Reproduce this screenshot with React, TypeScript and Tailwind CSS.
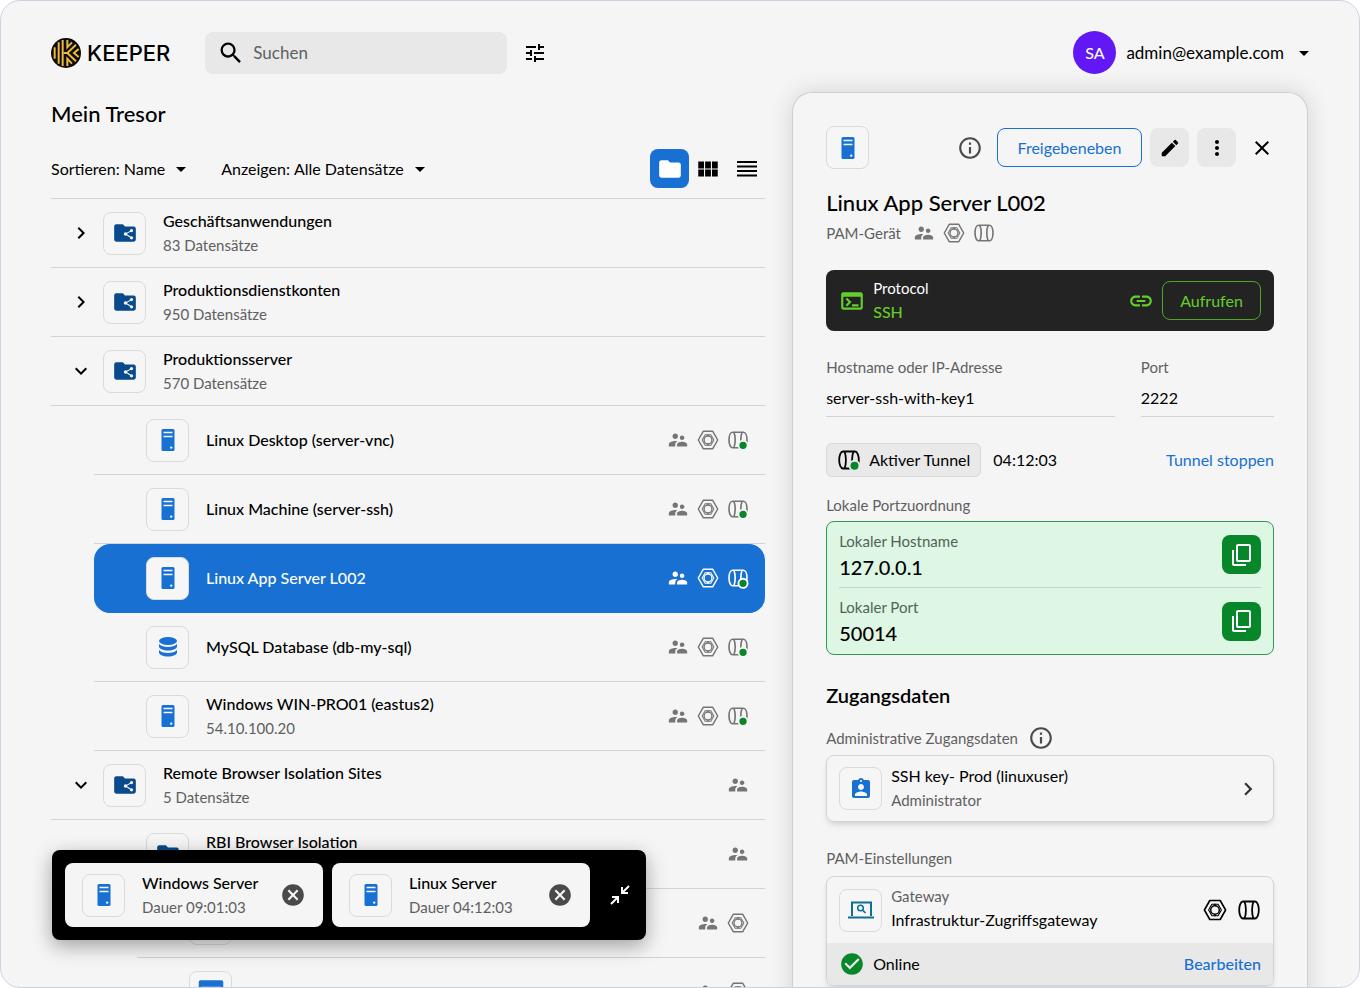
import type { ReactNode } from "react";
import {
  MdArrowDropDown,
  MdAssignmentInd,
  MdCancel,
  MdCheckCircle,
  MdChevronRight,
  MdClose,
  MdContentCopy,
  MdEdit,
  MdFolder,
  MdInfoOutline,
  MdKeyboardArrowDown,
  MdLink,
  MdMoreVert,
  MdOutlineTerminal,
  MdSearch,
  MdSupervisorAccount,
  MdTune,
  MdViewModule,
} from "react-icons/md";

type IconKind = "shared" | "server" | "database" | "browser" | "badge" | "laptop";
type Badge = "users" | "gateway" | "tunnel";

type Row = {
  name: string;
  sub?: string;
  level: 0 | 1 | 2;
  icon: IconKind;
  open?: boolean;
  selected?: boolean;
  badges?: Badge[];
};

const ROWS: Row[] = [
  { name: "Geschäftsanwendungen", sub: "83 Datensätze", level: 0, icon: "shared", open: false },
  { name: "Produktionsdienstkonten", sub: "950 Datensätze", level: 0, icon: "shared", open: false },
  { name: "Produktionsserver", sub: "570 Datensätze", level: 0, icon: "shared", open: true },
  { name: "Linux Desktop (server-vnc)", level: 1, icon: "server", badges: ["users", "gateway", "tunnel"] },
  { name: "Linux Machine (server-ssh)", level: 1, icon: "server", badges: ["users", "gateway", "tunnel"] },
  { name: "Linux App Server L002", level: 1, icon: "server", selected: true, badges: ["users", "gateway", "tunnel"] },
  { name: "MySQL Database (db-my-sql)", level: 1, icon: "database", badges: ["users", "gateway", "tunnel"] },
  { name: "Windows WIN-PRO01 (eastus2)", sub: "54.10.100.20", level: 1, icon: "server", badges: ["users", "gateway", "tunnel"] },
  { name: "Remote Browser Isolation Sites", sub: "5 Datensätze", level: 0, icon: "shared", open: true, badges: ["users"] },
  { name: "RBI Browser Isolation", sub: "3 Datensätze", level: 1, icon: "shared", badges: ["users"] },
  { name: "Azure Portal", level: 2, icon: "browser", badges: ["users", "gateway"] },
  { name: "AWS-datenpunkt", level: 2, icon: "browser", badges: ["users", "gateway"] },
];

const INDENT = { 0: "ml-0", 1: "ml-[43px]", 2: "ml-[86px]" };

function Logo() {
  return (
    <div className="flex items-center gap-1.5" aria-label="Keeper">
      <svg viewBox="0 0 90 90" className="size-[30px]" aria-hidden="true">
        <circle cx="45" cy="45" r="45" fill="#0b0b0b" />
        <g fill="none" stroke="#ecb93c" strokeWidth="6">
          <path d="M11 28v34M23 13v64M35 6v78" />
          <path d="M37 45h12l26-25M49 45l26 25" />
          <path d="M49 6v22l14-15M49 84V62l14 15" />
          <path d="M83 33 69 45l14 12" />
        </g>
      </svg>
      <span className="text-[22px] leading-7 font-medium font-['Inter',sans-serif]">KEEPER</span>
    </div>
  );
}

function GatewayIcon({ className = "size-[22px]" }: { className?: string }) {
  return (
    <svg viewBox="0 0 24 24" className={className} fill="none" stroke="currentColor" strokeWidth="1.6" strokeLinejoin="round" aria-hidden="true">
      <path d="M6.800 2.500h10.400L22.600 12l-5.400 9.500H6.800L1.400 12z" />
      <path d="M8.900 6.200h6.200L18.400 12l-3.300 5.800H8.900L5.600 12z" strokeWidth="1.100" />
      <circle cx="12" cy="12" r="4.300" strokeWidth="1.500" />
      <path d="M12 5.800v2M12 16.200v2" />
    </svg>
  );
}

function TunnelIcon({ dot, className = "size-[22px]", ring = "#f5f5f5" }: { dot?: boolean; className?: string; ring?: string }) {
  return (
    <svg viewBox="0 0 24 24" className={className} fill="none" stroke="currentColor" strokeWidth="1.800" aria-hidden="true">
      <path d="M6 3.500h12c2.300 0 3.800 4 3.800 8.500s-1.500 8.500-3.800 8.500H6c-2.300 0-3.800-4-3.800-8.500S3.700 3.500 6 3.500z" />
      <path d="M7.500 3.500c1.900 4.500 1.900 12.500 0 17M16.500 3.500c-1.900 4.500-1.900 12.500 0 17" />
      {dot && <circle cx="17.500" cy="17.800" r="5" fill="#08862a" stroke={ring} strokeWidth="2" />}
    </svg>
  );
}

function TileIcon({ kind }: { kind: IconKind }) {
  if (kind === "badge") return <MdAssignmentInd className="size-6 text-[#1870d2]" />;
  if (kind === "shared") {
    return (
      <svg viewBox="0 0 24 24" className="size-[26px]" aria-hidden="true">
        <path d="M4 4h6l2 2h8a2 2 0 0 1 2 2v10a2 2 0 0 1-2 2H4a2 2 0 0 1-2-2V6a2 2 0 0 1 2-2z" fill="#084a8c" />
        <path d="m18 9.800-5.500 3.200 5.500 3.400" fill="none" stroke="#f5f5f5" />
        <g fill="#f5f5f5">
          <circle cx="18" cy="9.800" r="1.500" />
          <circle cx="12.500" cy="13" r="1.600" />
          <circle cx="18" cy="16.400" r="1.500" />
        </g>
      </svg>
    );
  }
  if (kind === "database") {
    return (
      <svg viewBox="0 0 24 24" className="size-6 text-[#1870d2]" fill="currentColor" aria-hidden="true">
        <ellipse cx="12" cy="6" rx="9" ry="4" />
        <path d="M3 9c1.500 2 5 3 9 3s7.500-1 9-3v2.600c0 2.200-4 4-9 4s-9-1.800-9-4z" />
        <path d="M3 15c1.500 2 5 3 9 3s7.500-1 9-3v2.600c0 2.200-4 4-9 4s-9-1.800-9-4z" />
      </svg>
    );
  }
  if (kind === "browser") {
    return (
      <svg viewBox="0 0 24 24" className="size-7" aria-hidden="true">
        <path d="M3 2h18a1.500 1.500 0 0 1 1.500 1.500v17A1.500 1.500 0 0 1 21 22H3a1.500 1.500 0 0 1-1.500-1.500v-17A1.500 1.500 0 0 1 3 2zm.500 5.500V20h17V7.500z" fill="#1870d2" fillRule="evenodd" />
      </svg>
    );
  }
  if (kind === "laptop") {
    return (
      <svg viewBox="0 0 26 26" className="size-[26px]" fill="none" stroke="#0e6f93" strokeWidth="2" aria-hidden="true">
        <path d="M4 19V5.500h19V19M0 20.500h26" />
        <circle cx="12.500" cy="11" r="2.800" strokeWidth="1.500" />
        <path d="m14.500 13 3 3" strokeWidth="1.700" />
      </svg>
    );
  }
  return (
    <svg viewBox="0 0 14 24" className="h-6 w-3.5" aria-hidden="true">
      <rect x="0.500" y="1" width="13" height="22" rx="1.500" fill="#1870d2" />
      <path d="M2.500 4.500h9M2.500 8.500h9" stroke="#f5f5f5" strokeWidth="1.600" />
      <circle cx="10.200" cy="19.600" r="1.200" fill="#f5f5f5" />
    </svg>
  );
}

function Tile({ kind }: { kind: IconKind }) {
  return (
    <span className="flex size-[43px] shrink-0 items-center justify-center rounded-lg border border-[#dadada] bg-[#f6f6f6]">
      <TileIcon kind={kind} />
    </span>
  );
}

function Badges({ items, selected }: { items: Badge[]; selected?: boolean }) {
  return (
    <span className={`flex items-center gap-2 ${selected ? "text-white" : "text-[#757575]"}`}>
      {items.map((b) => {
        if (b === "users") return <MdSupervisorAccount key={b} className="size-[22px]" />;
        if (b === "gateway") return <GatewayIcon key={b} />;
        return <TunnelIcon key={b} dot ring={selected ? "#ffffff" : "#f5f5f5"} />;
      })}
    </span>
  );
}

function TreeRow({ row }: { row: Row }) {
  return (
    <li
      className={`flex h-[69px] shrink-0 items-center border-b pr-4 ${INDENT[row.level]} ${
        row.selected ? "rounded-2xl border-[#1870d2] bg-[#1870d2] text-white" : "border-[#d2d3d4]"
      }`}
    >
      <span className="flex w-[52px] shrink-0 justify-center pl-2">
        {row.open !== undefined && (
          <button type="button" aria-expanded={row.open} aria-label={row.name}>
            {row.open ? <MdKeyboardArrowDown className="size-6" /> : <MdChevronRight className="size-6" />}
          </button>
        )}
      </span>
      <Tile kind={row.icon} />
      <div className="ml-[17px] min-w-0 flex-1">
        <p className="truncate text-base leading-6 font-medium">{row.name}</p>
        {row.sub && <p className="truncate text-[15px] leading-6 text-[#5f6061]">{row.sub}</p>}
      </div>
      {row.badges && <Badges items={row.badges} selected={row.selected} />}
    </li>
  );
}

function Dropdown({ id, label, options }: { id: string; label: string; options: string[] }) {
  return (
    <div className="flex items-center">
      <label htmlFor={id}>{label}</label>
      <div className="relative ml-1">
        <select id={id} className="appearance-none bg-transparent pr-[26px] [field-sizing:content]">
          {options.map((o) => (
            <option key={o}>{o}</option>
          ))}
        </select>
        <MdArrowDropDown className="pointer-events-none absolute top-0 right-[-2px] size-6" />
      </div>
    </div>
  );
}

function Session({ name, time }: { name: string; time: string }) {
  return (
    <div className="flex h-16 w-[258px] items-center rounded-lg bg-[#f5f5f5] px-[17px]">
      <Tile kind="server" />
      <div className="ml-[17px] flex-1">
        <p className="text-base leading-6 font-medium">{name}</p>
        <p className="text-[15px] leading-6 text-[#5f6061]">{time}</p>
      </div>
      <button type="button" aria-label={`${name} schließen`}>
        <MdCancel className="size-[26px] text-[#4a4a4a]" />
      </button>
    </div>
  );
}

function Field({ id, label, value, className }: { id: string; label: string; value: string; className: string }) {
  return (
    <div className={className}>
      <label htmlFor={id} className="block text-[15px] leading-6 text-[#5f6061]">
        {label}
      </label>
      <input id={id} defaultValue={value} className="h-[38px] w-full border-b border-[#d2d3d4] bg-transparent text-base outline-none" />
    </div>
  );
}

function PortRow({ label, value }: { label: string; value: string }) {
  return (
    <div className="flex h-[66px] items-center justify-between">
      <div>
        <p className="text-[15px] leading-6 text-[#4f6456]">{label}</p>
        <p className="text-xl leading-7 font-medium">{value}</p>
      </div>
      <button type="button" aria-label={`${label} kopieren`} className="flex size-[39px] items-center justify-center rounded-lg bg-[#08862a] text-white">
        <MdContentCopy className="size-6 -scale-y-100" />
      </button>
    </div>
  );
}

function GreyButton({ label, children }: { label: string; children: ReactNode }) {
  return (
    <button type="button" aria-label={label} className="ml-2 flex size-[39px] items-center justify-center rounded-lg bg-[#e8e8e8]">
      {children}
    </button>
  );
}

function DetailPanel() {
  return (
    <aside className="rounded-t-[20px] border border-b-0 border-[#cfcfd2] bg-[#f5f5f5] px-[33px] pt-[33px] shadow-[0_0_24px_rgba(0,0,0,0.14)]">
      <div className="flex items-center">
        <Tile kind="server" />
        <span className="flex-1" />
        <MdInfoOutline className="mr-3.5 size-[26px] text-[#4a4a4a]" />
        <button type="button" className="h-[39px] w-[145px] rounded-lg border border-[#1870d2] text-base text-[#1870d2]">
          Freigebeneben
        </button>
        <GreyButton label="Bearbeiten">
          <MdEdit className="size-[22px]" />
        </GreyButton>
        <GreyButton label="Mehr">
          <MdMoreVert className="size-6" />
        </GreyButton>
        <button type="button" aria-label="Schließen" className="ml-3.5">
          <MdClose className="size-6" />
        </button>
      </div>

      <h2 className="mt-5 text-[22px] leading-7 font-medium">Linux App Server L002</h2>
      <div className="mt-1 flex h-6 items-center text-[15px] text-[#5f6061]">
        PAM-Gerät
        <span className="ml-3 flex items-center gap-2 text-[#757575]">
          <MdSupervisorAccount className="size-[22px]" />
          <GatewayIcon />
          <TunnelIcon />
        </span>
      </div>

      <div className="mt-[25px] flex h-[61px] items-center rounded-lg bg-[#232323] px-[13px] text-[#63cf2b]">
        <MdOutlineTerminal className="size-[26px]" />
        <div className="ml-2 flex-1 pb-0.5">
          <p className="text-[15px] leading-6 text-white">Protocol</p>
          <p className="text-base leading-6 font-medium">SSH</p>
        </div>
        <MdLink className="mr-2 size-[26px]" />
        <button type="button" className="h-[39px] w-[99px] rounded-lg border border-[#4fa527] text-base">
          Aufrufen
        </button>
      </div>

      <div className="mt-6 flex gap-[26px]">
        <Field id="host" label="Hostname oder IP-Adresse" value="server-ssh-with-key1" className="min-w-0 grow-[13] basis-0" />
        <Field id="port" label="Port" value="2222" className="min-w-0 grow-[6] basis-0" />
      </div>

      <div className="mt-[26px] flex items-center">
        <span className="flex h-[34px] items-center gap-2 rounded-md border border-[#d8d8d8] bg-[#e9e9e9] px-2.5 text-base">
          <TunnelIcon dot className="size-6" ring="#e9e9e9" />
          Aktiver Tunnel
        </span>
        <span className="ml-3 flex-1 text-base">04:12:03</span>
        <button type="button" className="text-base text-[#1870d2]">
          Tunnel stoppen
        </button>
      </div>

      <p className="mt-4 text-[15px] leading-6 text-[#5f6061]">Lokale Portzuordnung</p>
      <div className="mt-1 divide-y divide-[#c4d4c9] rounded-lg border border-[#2f9a50] bg-[#def6e4] px-3">
        <PortRow label="Lokaler Hostname" value="127.0.0.1" />
        <PortRow label="Lokaler Port" value="50014" />
      </div>

      <h3 className="mt-[26px] text-xl leading-7 font-semibold">Zugangsdaten</h3>
      <div className="mt-4 flex items-center gap-2.5">
        <p className="text-[15px] leading-6 text-[#5f6061]">Administrative Zugangsdaten</p>
        <MdInfoOutline className="size-[26px] text-[#4a4a4a]" />
      </div>
      <button type="button" className="mt-1 flex h-[67px] w-full items-center rounded-lg border border-[#d2d3d4] px-3 text-left shadow-md">
        <Tile kind="badge" />
        <span className="ml-[9px] flex-1 pb-0.5">
          <span className="block text-base leading-6">SSH key- Prod (linuxuser)</span>
          <span className="block text-[15px] leading-6 text-[#5f6061]">Administrator</span>
        </span>
        <MdChevronRight className="size-[26px] text-[#333333]" />
      </button>

      <p className="mt-6 text-[15px] leading-6 text-[#5f6061]">PAM-Einstellungen</p>
      <div className="mt-1.5 overflow-hidden rounded-lg border border-[#d2d3d4] shadow-md">
        <div className="flex h-[66px] items-center px-3">
          <Tile kind="laptop" />
          <div className="ml-[9px] flex-1 pb-1">
            <p className="text-[15px] leading-6 text-[#5f6061]">Gateway</p>
            <p className="text-base leading-6">Infrastruktur-Zugriffsgateway</p>
          </div>
          <div className="flex gap-2.5">
            <GatewayIcon className="size-6" />
            <TunnelIcon className="size-6" />
          </div>
        </div>
        <div className="flex h-[42px] items-center bg-[#e8e8e8] px-3">
          <MdCheckCircle className="size-[26px] text-[#08862a]" />
          <span className="ml-2 flex-1 text-base">Online</span>
          <button type="button" className="text-base font-medium text-[#1870d2]">
            Bearbeiten
          </button>
        </div>
      </div>
    </aside>
  );
}

export default function App() {
  return (
    <div className="h-screen bg-white font-['Lato','Liberation_Sans',sans-serif] text-black">
      <div className="relative flex h-full flex-col overflow-hidden rounded-[20px] border border-[#cdd2e0] bg-[#f5f5f5] pt-[30px] pr-[51px] pl-[50px]">
        <header className="flex shrink-0 items-center">
          <Logo />
          <label className="ml-[35px] flex h-[42px] w-[302px] items-center rounded-lg bg-[#e8e8e8] px-3">
            <MdSearch className="size-7 shrink-0" />
            <input type="search" placeholder="Suchen" aria-label="Suchen" className="ml-2 w-full bg-transparent text-[17px] outline-none placeholder:text-[#5f6061]" />
          </label>
          <button type="button" aria-label="Filter" className="ml-4">
            <MdTune className="size-6" />
          </button>
          <button type="button" className="-mr-2 ml-auto flex items-center">
            <span className="flex size-[43px] items-center justify-center rounded-full bg-[#6118f4] text-base font-medium text-white">SA</span>
            <span className="ml-2.5 text-[17px]">admin@example.com</span>
            <MdArrowDropDown className="ml-2 size-6" />
          </button>
        </header>

        <div className="mt-[18px] grid min-h-0 flex-1 grid-cols-[18fr_13fr] gap-[27px]">
          <main>
            <h1 className="mt-2 text-[22px] leading-7 font-medium">Mein Tresor</h1>
            <div className="mt-[21px] flex h-[39px] items-center gap-[30px] text-base">
              <Dropdown id="sort" label="Sortieren:" options={["Name", "Datum"]} />
              <Dropdown id="show" label="Anzeigen:" options={["Alle Datensätze", "Freigegeben"]} />
              <div className="mr-1.5 ml-auto flex items-center">
                <button type="button" aria-label="Ordner" className="flex size-[39px] items-center justify-center rounded-lg bg-[#1870d2] text-white">
                  <MdFolder className="size-[26px]" />
                </button>
                <button type="button" aria-label="Kacheln" className="ml-1.5">
                  <MdViewModule className="size-[26px]" />
                </button>
                <button type="button" aria-label="Liste" className="ml-3.5">
                  <svg viewBox="0 0 24 24" className="size-6" stroke="currentColor" strokeWidth="2" aria-hidden="true">
                    <path d="M2 5h20M2 9.500h20M2 14h20M2 18.500h20" />
                  </svg>
                </button>
              </div>
            </div>
            <ul className="mt-[10px] border-t border-[#d2d3d4]">
              {ROWS.map((row) => (
                <TreeRow key={row.name} row={row} />
              ))}
            </ul>
          </main>
          <DetailPanel />
        </div>

        {/* open sessions, floats over the list */}
        <div className="absolute bottom-[47px] left-[51px] flex h-[90px] items-center gap-[9px] rounded-lg bg-black pr-3.5 pl-[13px] shadow-[0_6px_20px_rgba(0,0,0,0.35)]">
          <Session name="Windows Server" time="Dauer 09:01:03" />
          <Session name="Linux Server" time="Dauer 04:12:03" />
          <button type="button" aria-label="Minimieren" className="ml-[9px] text-white">
            <svg viewBox="0 0 24 24" className="size-6" fill="none" stroke="currentColor" strokeWidth="2" aria-hidden="true">
              <path d="m21 3-6.500 6.500M14 4v6h6M3 21l6.500-6.500M4 14h6v6" />
            </svg>
          </button>
        </div>
      </div>
    </div>
  );
}
